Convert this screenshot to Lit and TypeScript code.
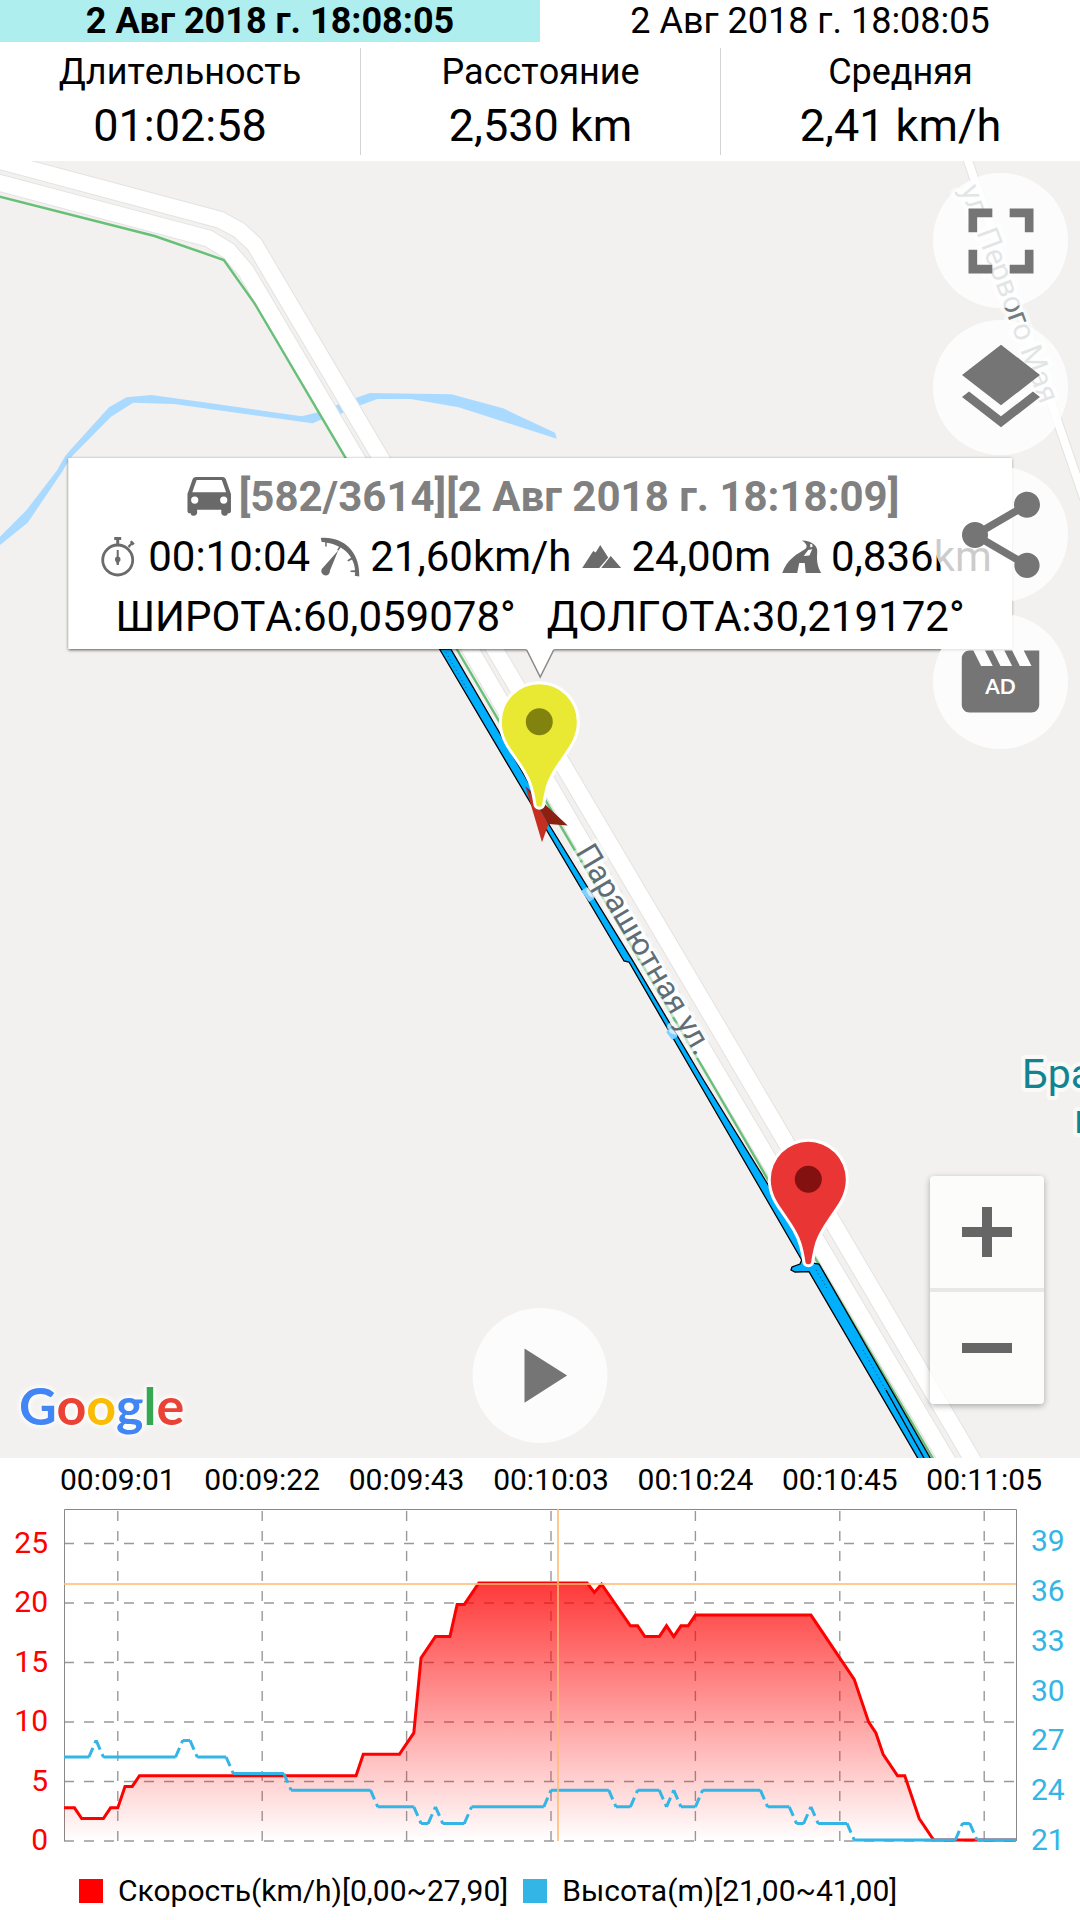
import { LitElement, html, svg, css } from "lit";
import { customElement, state } from "lit/decorators.js";

type Point = [number, number];

const SPEED: Point[] = [
  [-67.5, 2.7], [-66, 2.7], [-65, 1.8], [-62, 1.8], [-61, 2.7], [-60, 2.7], [-59, 4.5], [-58, 4.5],
  [-57, 5.4], [-27, 5.4], [-26, 7.2], [-21, 7.2], [-19, 9], [-18, 15.3], [-16, 17.1], [-14, 17.1],
  [-13, 19.8], [-12, 19.8], [-10, 21.6], [5, 21.6], [6, 20.8], [7, 21.5], [11, 18], [12, 18],
  [13, 17.1], [15, 17.1], [16, 18], [17, 17.1], [18, 18], [19, 18], [20, 18.9], [36, 18.9],
  [42, 13.5], [44, 9.9], [45, 9], [46, 7.2], [48, 5.4], [49, 5.4], [51, 1.8], [53, 0], [64.4, 0],
];

const ALTITUDE: Point[] = [
  [-67.5, 26], [-64, 26], [-63, 27], [-62, 26], [-52, 26], [-51, 27], [-50, 27], [-49, 26], [-45, 26],
  [-44, 25], [-37, 25], [-36, 24], [-25, 24], [-24, 23], [-19, 23], [-18, 22], [-17, 22], [-16, 23],
  [-15, 22], [-12, 22], [-11, 23], [-1, 23], [0, 24], [8, 24], [9, 23], [11, 23], [12, 24], [15, 24],
  [16, 23], [17, 24], [18, 23], [20, 23], [21, 24], [29, 24], [30, 23], [33, 23], [34, 22], [35, 22],
  [36, 23], [37, 22], [41, 22], [42, 21], [56, 21], [57, 22], [58, 22], [59, 21], [64.4, 21],
];

const TIMES = ["00:09:01", "00:09:22", "00:09:43", "00:10:03", "00:10:24", "00:10:45", "00:11:05"];

const PLOT = { left: 64, right: 1016, top: 51, bottom: 383 };
const STEP = 7.22;
const xAt = (i: number) => 551 + i * STEP;
const speedY = (v: number) => PLOT.bottom - v * 11.9;
const altitudeY = (v: number) => PLOT.bottom - (v - 21) * 16.6;

@customElement("track-chart")
export class TrackChart extends LitElement {
  static styles = css`
    :host { display: block; background: #fff; font-family: Roboto, "Noto Sans", sans-serif; }
    .plot { display: block; width: 100%; height: auto; }
    .axis { font-size: 30px; }
    .time { fill: #000; text-anchor: middle; }
    .speed { fill: #f00; text-anchor: end; }
    .altitude { fill: #33b5e5; }
    .legend {
      display: flex; flex-wrap: wrap; align-items: center; gap: 15px;
      padding: 1px 32px 7px 79px; font-size: 30px; line-height: 44px; color: #000;
    }
    .entry { display: flex; align-items: center; gap: 15px; }
    .swatch { width: 24px; height: 24px; background: #f00; }
    .swatch.blue { background: #33b5e5; }
  `;

  private altitudePath(): string {
    let d = "";
    for (let k = 1; k < ALTITUDE.length; k++) {
      const [i0, v0] = ALTITUDE[k - 1];
      const [i1, v1] = ALTITUDE[k];
      const parts = v0 === v1 ? Math.ceil(i1 - i0) : 1;
      for (let p = 0; p < parts; p++) {
        const a = i0 + ((i1 - i0) * p) / parts;
        const b = i0 + ((i1 - i0) * (p + 1)) / parts;
        d += `M${xAt(a)} ${altitudeY(v0) - 1}L${xAt(b)} ${altitudeY(v1) - 1}`;
      }
    }
    return d;
  }

  render() {
    const line = SPEED.map(([i, v]) => `${xAt(i)} ${speedY(v) - 1}`).join("L");
    const { left, right, top, bottom } = PLOT;
    return html`
      <svg class="plot" viewBox="0 0 1080 410" role="img" aria-label="Скорость, Высота">
        <defs>
          <linearGradient id="fade" gradientUnits="userSpaceOnUse" x1="0" y1=${top} x2="0" y2=${bottom}>
            <stop offset="0" stop-color="#f00"></stop>
            <stop offset="1" stop-color="#f00" stop-opacity="0"></stop>
          </linearGradient>
          <clipPath id="area"><rect x=${left} y=${top} width=${right - left} height=${bottom - top + 1}></rect></clipPath>
        </defs>
        ${TIMES.map((t, n) => {
          const x = xAt((n - 3) * 20);
          return svg`
            <text class="axis time" x=${x} y="32">${t}</text>
            <line x1=${x} y1=${bottom} x2=${x} y2=${top} stroke="#999" stroke-width="1.4" stroke-dasharray="10 10"></line>`;
        })}
        ${[0, 5, 10, 15, 20, 25].map((v) => svg`
          <text class="axis speed" x="48" y=${speedY(v) + 9}>${v}</text>
          <line x1=${left} y1=${speedY(v)} x2=${right} y2=${speedY(v)} stroke="#999" stroke-width="1.4" stroke-dasharray="10 10"></line>`)}
        ${[21, 24, 27, 30, 33, 36, 39].map((v) => svg`
          <text class="axis altitude" x="1031" y=${altitudeY(v) + 9}>${v}</text>`)}
        <path d="M${left + 0.5} ${bottom}V${top + 0.5}H${right + 0.5}V${bottom}" fill="none" stroke="#888"></path>
        <g clip-path="url(#area)">
          <path d="M${line}L${right} ${bottom}L${left} ${bottom}Z" fill="url(#fade)"></path>
          <path d="M${line}" fill="none" stroke="#f00" stroke-width="3"></path>
          <path d=${this.altitudePath()} fill="none" stroke="#33b5e5" stroke-width="3" stroke-dasharray="10 5"></path>
          <path d="M${left} 126H${right}M558 ${top}V${bottom}" stroke="#ffbb73" stroke-opacity="0.8" stroke-width="2"></path>
        </g>
      </svg>
      <div class="legend">
        <div class="entry"><span class="swatch"></span>Скорость(km/h)[0,00~27,90]</div>
        <div class="entry"><span class="swatch blue"></span>Высота(m)[21,00~41,00]</div>
      </div>
    `;
  }
}

const PIN =
  "M-37.5 0A37.5 37.5 0 0 1 37.5 0C37.5 13 32 22 26 30.500C16 45 9 55 6 67C4.500 73 3.500 78 3 82A3 3 0 0 1-3 82C-3.500 78-4.500 73-6 67C-9 55-16 45-26 30.500C-32 22-37.500 13-37.500 0Z";

const ROAD_A = "M-30 153L220 219.7L239.5 230.3L254.5 244.3L380 456.7L494.5 649L725.7 1040L985 1481";
const ROAD_B = "M-30 175L208.5 238.5L228.6 251L246 271L355.5 456.7L470 649L697.5 1040L960 1482";
const ROAD_C = "M965 152L1064 440L1088 510";

@customElement("track-map")
export class TrackMap extends LitElement {
  static styles = css`
    :host { display: block; position: relative; overflow: hidden; background: #f2f1ef; font-family: Roboto, "Noto Sans", sans-serif; }
    .canvas { position: absolute; inset: 0; width: 100%; height: 100%; }
    .street { font-size: 31px; fill: #5f6e76; stroke: #fff; stroke-opacity: 0.6; stroke-width: 8px; paint-order: stroke; stroke-linejoin: round; }
    .street.small { font-size: 30px; fill: #717c82; }
    .place { font-size: 41px; fill: #128391; stroke: #f9f9f7; stroke-width: 8px; paint-order: stroke; stroke-linejoin: round; }
    .google { font-family: Lato, sans-serif; font-size: 52px; font-weight: 700; filter: drop-shadow(0 0 2px #fff) drop-shadow(0 0 3px #fff); }
    .brand { position: absolute; left: 10px; bottom: 10px; width: 190px; height: 78px; }
    .ad { font-family: Lato, sans-serif; font-size: 5.4px; font-weight: 700; fill: #fff; text-anchor: middle; }

    .callout {
      position: absolute; left: 50%; bottom: calc(50% + 161px); transform: translateX(-50%);
      box-sizing: border-box; width: max-content; max-width: 100%; padding: 9px 20px 2px;
      background: #fff; box-shadow: 0 1px 3px rgba(0, 0, 0, 0.65);
      font-size: 42px; line-height: 60px; color: #000; white-space: nowrap;
    }
    .tail { position: absolute; left: 50%; top: 100%; width: 32px; height: 32px; margin-left: -16px; margin-top: -1px; }
    .row { display: flex; align-items: center; justify-content: center; gap: 10px; }
    .lead { padding-left: 10px; }
    .title { color: #808080; font-weight: 700; }
    .plain { font-kerning: none; }
    .coords { gap: 31px; }
    .glyph { width: 40px; height: 40px; flex: none; fill: #6b6b6b; }
    .car { width: 58px; height: 58px; margin: -6px -10px 0; flex: none; fill: #696969; }

    .tools { position: absolute; top: 12px; right: 12px; display: flex; flex-direction: column; gap: 12px; }
    .round {
      display: flex; align-items: center; justify-content: center; width: 135px; height: 135px;
      padding: 0; border: 0; border-radius: 50%; background: rgba(255, 255, 255, 0.8); cursor: pointer;
    }
    .icon { width: 104px; height: 104px; fill: #757575; }
    .icon.compact { width: 93px; height: 93px; }
    .play { position: absolute; left: 50%; bottom: 15px; transform: translateX(-50%); }
    .zoom {
      position: absolute; right: 36px; bottom: 54px; display: flex; flex-direction: column;
      border-radius: 4px; background: rgba(255, 255, 255, 0.75); box-shadow: 0 2px 6px rgba(0, 0, 0, 0.3);
    }
    .step {
      display: flex; align-items: center; justify-content: center; width: 114px; height: 112px;
      padding: 0; border: 0; background: none; cursor: pointer;
    }
    .step + .step { height: 116px; border-top: 4px solid #e8e8e8; }
    .sign { width: 50px; height: 50px; fill: #666; }
  `;

  private road(d: string, width: number) {
    return svg`
      <path d=${d} fill="none" stroke="#e4e3e1" stroke-width=${width + 2}></path>
      <path d=${d} fill="none" stroke="#fff" stroke-width=${width}></path>`;
  }

  private pin(x: number, y: number, fill: string, dot: string) {
    return svg`
      <g transform="translate(${x} ${y})">
        <path d=${PIN} fill=${fill} stroke="#fff" stroke-width="6" paint-order="stroke"></path>
        <circle r="13.5" fill=${dot}></circle>
      </g>`;
  }

  render() {
    return html`
      <svg class="canvas" viewBox="0 161 1080 1297" preserveAspectRatio="xMidYMid slice">
        <path fill="#aadaff" d="M0 536.7L26.6 510L57.3 470L64.7 456.7L70.3 450L109 407.3L126.5 397.3L151.7 395L210.9 403.3L301.5 416.3L318 412.3L336.7 405L355 398.3L370 393L451.3 394.3L503 408.3L555 432.7L556.8 438.7L458.7 407.3L410.7 399L377.4 399L358.9 405.7L342 413.3L321.9 419.3L312.6 423.3L173.9 404L133.2 402.7L111 416.7L70.3 458L62 472L27.7 522.7L0 545Z"></path>
        ${this.road(ROAD_C, 8)}
        ${this.road(ROAD_A, 16)}
        ${this.road(ROAD_B, 16)}
        <path d="M-5 195.5L154.6 236L223.8 260L254.5 303.3L344.8 456.7L456.7 649L499.3 721.7L710 1080L767.7 1179.3L815 1258L935 1462" fill="none" stroke="#67bf78" stroke-width="2.4"></path>
        <path d="M439.5 649L624 961L629 962L697.3 1080L801.7 1260L800 1264L792 1267L791 1270L795 1272L809 1271.7L920 1462L932.5 1462L838 1297L819 1264L805 1262L796 1230L703.5 1080L633.3 961.7L549.3 825L530 785L450.7 649Z" fill="#00b0ff" stroke="#000" stroke-width="1.3"></path>
        <path d="M444 649L468 691M816 1270L828 1290M863 1350L888 1394" fill="none" stroke="#000" stroke-opacity="0.6" stroke-dasharray="1 3"></path>
        <path d="M886 1390L924 1458" fill="none" stroke="#000" stroke-width="1.3"></path>
        <path d="M584 889L592 900M669 1030L675 1038" stroke="#7fcfff" stroke-width="7"></path>
        <text class="street" transform="translate(575 852) rotate(59.4)">Парашютная ул.</text>
        <text class="street small" transform="translate(960 189) rotate(69.5)">ул. Первого Мая</text>
        <text class="place" x="1022" y="1088">Бра</text>
        <text class="place" x="1074" y="1133">к</text>
        <path d="M525.3 786L542 842.3L548.5 824Z" fill="#c52f22"></path>
        <path d="M525.3 786L567.7 825.5L548.5 824Z" fill="#892012"></path>
        ${this.pin(539.3, 721.7, "#e9e934", "#82820f")}
        ${this.pin(808.3, 1179.3, "#ea3535", "#82110f")}
      </svg>

      <svg class="brand" viewBox="0 0 190 78" role="img" aria-label="Google">
        <text class="google" x="9" y="55"><tspan fill="#4285f4">G</tspan><tspan fill="#ea4335">o</tspan><tspan fill="#fbbc05">o</tspan><tspan fill="#4285f4">g</tspan><tspan fill="#34a853">l</tspan><tspan fill="#ea4335">e</tspan></text>
      </svg>

      <div class="callout">
        <div class="row lead title">
          <svg class="car" viewBox="0 0 24 24"><path d="M18.92 6.01C18.72 5.42 18.16 5 17.5 5h-11c-.66 0-1.21.42-1.42 1.01L3 12v7c0 .55.45 1 1 1l.3 0c.1.6.4 1 1 1h.4c.7 0 1.3-.5 1.3-1.200V18.500h10v1.300c0 .7.6 1.200 1.300 1.200h.4c.6 0 .9-.4 1-1l.3 0c.55 0 1-.45 1-1v-7l-2.080-5.990zM6 16a1.500 1.500 0 1 1 0-3 1.500 1.500 0 0 1 0 3zm12 0a1.500 1.500 0 1 1 0-3 1.500 1.500 0 0 1 0 3zM5 11.300L6.800 6.200h10.400l1.800 5.100H5z"></path></svg>
          <span>[582/3614][2 Авг 2018 г. 18:18:09]</span>
        </div>
        <div class="row lead plain">
          <svg class="glyph" viewBox="0 0 40 40"><circle cx="19.500" cy="23" r="15" fill="none" stroke="#6b6b6b" stroke-width="2.800"></circle><path d="M16 0h7v3h-2v5h-3V3h-2zM29.500 9l3-3-1-1 2-1.500 3 3-2 2-1-.5-2.500 3zM18.500 13h2v6.500a3.200 3.200 0 0 1 .5 5.500l-.5 3h-2l-.5-3a3.200 3.200 0 0 1 .5-5.500z"></path></svg>
          <span>00:10:04</span>
          <svg class="glyph" viewBox="0 0 40 40"><path d="M.5 1C22-1 40 14 39 39.500l-4.500-.7c.3-1.200.5-2.400.4-3.600l-4.600-.2v-1.500l4.500-.2c-.3-4-1.300-7.600-3-10.800l-3.800 2-.9-1.200 3.800-2.500c-2.700-4.400-6.200-7.800-10.500-10.200l-2.300 3.200-1.200-.8 2-3.300C14.500 7.400 10.500 6.200 6.500 5.800v3.700H5V5.300L1.500 5zM18 13.500l-8.300 20.300a4.300 4.300 0 1 1-6.800-3.200z"></path></svg>
          <span>21,60km/h</span>
          <svg class="glyph" viewBox="0 0 40 40"><path d="M1 31L12 14l2.500 1.500L19 8l8 12.500L18 31zM20 31l9.500-12L40 31z"></path></svg>
          <span>24,00m</span>
          <svg class="glyph" viewBox="0 0 40 40"><path fill-rule="evenodd" d="M1 36C6 22 16 17 24 12c3-2.500 1-6-3.500-8.500C31 4 37 8.500 36 16c-.8 8 .5 14 4 20H24.500l-1-10H18l-2 10zM29 7l2 .3.300 2.700-2.300.3zM27 13l4-.8-2.800 6.300-5.700.5z"></path></svg>
          <span>0,836km</span>
        </div>
        <div class="row coords plain"><span>ШИРОТА:60,059078°</span><span>ДОЛГОТА:30,219172°</span></div>
        <svg class="tail" viewBox="0 0 32 32"><path d="M2 1L16 29L30 1" fill="#fff" stroke="#8a8a8a" stroke-width="1.500"></path><path d="M2 0h28v1.500H2z" fill="#fff"></path></svg>
      </div>

      <div class="tools">
        <button class="round" aria-label="Во весь экран"><svg class="icon" viewBox="0 0 24 24"><path d="M4.500 4.500H10v2H6.500V10h-2zM14 4.500h5.500V10h-2V6.500H14zM4.500 14h2v3.500H10v2H4.500zM17.500 14h2v5.500H14v-2h3.500z"></path></svg></button>
        <button class="round" aria-label="Слои"><svg class="icon" viewBox="0 0 24 24"><path d="M11.990 18.540l-7.370-5.730L3 14.070l9 7 9-7-1.630-1.270-7.380 5.740zM12 16l7.360-5.730L21 9l-9-7-9 7 1.630 1.270L12 16z"></path></svg></button>
        <button class="round" aria-label="Поделиться"><svg class="icon" viewBox="0 0 24 24"><path d="M18 16.080c-.76 0-1.440.3-1.960.77L8.910 12.700c.05-.23.090-.46.090-.7s-.040-.47-.090-.7l7.050-4.110c.54.5 1.250.81 2.040.81 1.660 0 3-1.340 3-3s-1.340-3-3-3-3 1.340-3 3c0 .24.040.47.090.7L8.040 9.810C7.500 9.310 6.790 9 6 9c-1.660 0-3 1.340-3 3s1.340 3 3 3c.79 0 1.500-.31 2.040-.81l7.120 4.160c-.050.21-.080.43-.080.65 0 1.610 1.310 2.920 2.920 2.920s2.920-1.310 2.920-2.920-1.310-2.920-2.920-2.920z"></path></svg></button>
        <button class="round" aria-label="AD"><svg class="icon compact" viewBox="0 0 24 24"><path d="M18 4l2 4h-3l-2-4h-2l2 4h-3l-2-4H8l2 4H7L5 4H4c-1.100 0-1.990.9-1.990 2L2 18c0 1.100.9 2 2 2h16c1.100 0 2-.9 2-2V4h-4z"></path><text class="ad" x="12" y="15.300">AD</text></svg></button>
      </div>

      <button class="round play" aria-label="Воспроизвести"><svg class="icon compact" viewBox="0 0 24 24"><path d="M8 5v14l11-7z"></path></svg></button>

      <div class="zoom">
        <button class="step" aria-label="Увеличить"><svg class="sign" viewBox="0 0 50 50"><path d="M20 0h10v20h20v10H30v20H20V30H0V20h20z"></path></svg></button>
        <button class="step" aria-label="Уменьшить"><svg class="sign" viewBox="0 0 50 50"><path d="M0 20h50v10H0z"></path></svg></button>
      </div>
    `;
  }
}

@customElement("app-root")
export class AppRoot extends LitElement {
  static styles = css`
    :host { display: block; font-family: Roboto, "Noto Sans", sans-serif; color: #000; background: #fff; }
    .page { display: flex; flex-direction: column; min-height: 100vh; }
    .tabs { display: grid; grid-template-columns: 1fr 1fr; }
    .tab { height: 42px; padding: 0; border: 0; background: #fff; color: #000; font: 400 36px/42px Roboto, "Noto Sans", sans-serif; cursor: pointer; }
    .tab.active { background: #afeeee; font-weight: 700; }
    .stats { display: grid; grid-template-columns: repeat(3, 1fr); padding: 6px 0; text-align: center; }
    .stat { height: 107px; box-sizing: border-box; padding-top: 3px; }
    .stat + .stat { border-left: 1px solid #d4d4d4; }
    .label { font-size: 36px; line-height: 42px; font-kerning: none; }
    .value { font-size: 45px; line-height: 66px; }
    .map { flex: 1; min-height: 900px; }
  `;

  @state() private active = 0;

  render() {
    const stats = [["Длительность", "01:02:58"], ["Расстояние", "2,530 km"], ["Средняя", "2,41 km/h"]];
    return html`
      <div class="page">
        <div class="tabs">
          ${[0, 1].map((n) => html`
            <button class="tab ${this.active === n ? "active" : ""}" @click=${() => (this.active = n)}>2 Авг 2018 г. 18:08:05</button>`)}
        </div>
        <div class="stats">
          ${stats.map(([label, value]) => html`
            <div class="stat"><div class="label">${label}</div><div class="value">${value}</div></div>`)}
        </div>
        <track-map class="map"></track-map>
        <track-chart></track-chart>
      </div>
    `;
  }
}
